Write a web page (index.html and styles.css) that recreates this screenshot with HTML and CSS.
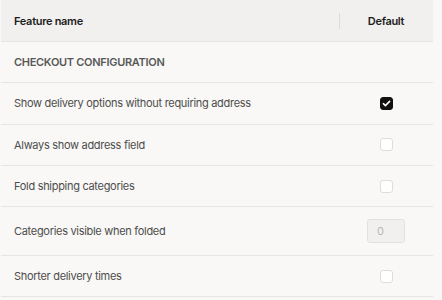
FILE: index.html
```html
<!DOCTYPE html>
<html>
<head>
<meta charset="utf-8">
<link rel="stylesheet" href="styles.css">
</head>
<body>
<div class="table">
  <div class="row head">
    <div class="name">Feature name</div>
    <div class="val"><span class="divider"></span>Default</div>
  </div>
  <div class="row section">
    <div class="name">CHECKOUT CONFIGURATION</div>
  </div>
  <div class="row">
    <div class="name">Show delivery options without requiring address</div>
    <div class="val"><span class="cb checked"><svg viewBox="0 0 13 13" width="13" height="13"><path d="M3.4 6.7 L5.4 8.6 L9.6 4.4" fill="none" stroke="#fff" stroke-width="1.6" stroke-linecap="round" stroke-linejoin="round"/></svg></span></div>
  </div>
  <div class="row">
    <div class="name">Always show address field</div>
    <div class="val"><span class="cb"></span></div>
  </div>
  <div class="row">
    <div class="name">Fold shipping categories</div>
    <div class="val"><span class="cb"></span></div>
  </div>
  <div class="row tall">
    <div class="name">Categories visible when folded</div>
    <div class="val"><span class="num">0</span></div>
  </div>
  <div class="row">
    <div class="name">Shorter delivery times</div>
    <div class="val"><span class="cb"></span></div>
  </div>
</div>
</body>
</html>
```
FILE: styles.css
```css
html, body {
  margin: 0;
  padding: 0;
  background: #f9f8f6;
}
body {
  font-family: Inter, "Liberation Sans", sans-serif;
  font-size: 11px;
  letter-spacing: -0.3px;
  color: #4d4d4d;
}
.table {
  width: 432px;
  margin-left: 1px;
}
.row {
  display: flex;
  align-items: center;
  height: 40.3px;
  border-bottom: 1px solid #e6e5e2;
}
.row.head {
  height: 41px;
}
.row.tall {
  height: 48px;
}
.name {
  flex: 1;
  padding-left: 13px;
}
.val {
  width: 94px;
  display: flex;
  align-items: center;
  justify-content: center;
  position: relative;
  align-self: stretch;
}
.head {
  background: #f1f0ee;
  color: #1c1c1c;
  font-weight: 600;
}
.divider {
  position: absolute;
  left: 0;
  top: 13px;
  bottom: 12px;
  width: 1px;
  background: #dddcd9;
}
.section .name {
  font-weight: 600;
  color: #585858;
}
.cb {
  width: 13px;
  height: 13px;
  box-sizing: border-box;
  border: 1px solid #dedddb;
  border-radius: 3px;
  background: #fff;
  display: block;
}
.cb svg {
  display: block;
  margin: -1px;
}
.cb.checked {
  background: #111;
  border-color: #111;
}
.num {
  width: 38px;
  height: 24px;
  box-sizing: border-box;
  border: 1px solid #e2e1de;
  border-radius: 3px;
  background: #f1f0ee;
  color: #b8b8b8;
  padding-left: 9px;
  display: flex;
  align-items: center;
}
```
